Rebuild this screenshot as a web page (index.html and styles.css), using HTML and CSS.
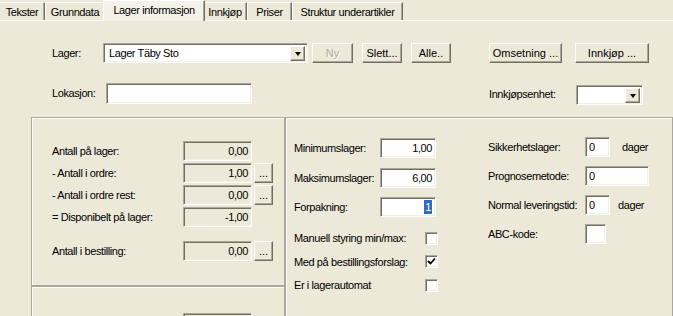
FILE: index.html
```html
<!DOCTYPE html>
<html lang="no">
<head>
    <meta charset="UTF-8">
    <title>Lager informasjon</title>
    <link rel="stylesheet" href="styles.css">
</head>
<body>
    <div class="window">
        <div class="tabs">
            <span class="tab tab-tekster">Tekster</span>
            <span class="tab tab-grunn">Grunndata</span>
            <span class="tab tab-lager active">Lager informasjon</span>
            <span class="tab tab-innk">Innkjøp</span>
            <span class="tab tab-priser">Priser</span>
            <span class="tab tab-struktur">Struktur underartikler</span>
        </div>

        <div class="sheet">
            <div class="head-row">
                <span class="lbl lbl-lager">Lager:</span>
                <div class="combo combo-lager">
                    <span class="combo-text">Lager Täby Sto</span>
                    <span class="drop"><span class="arrow"></span></span>
                </div>
                <button class="btn btn-ny" disabled>Ny</button>
                <button class="btn btn-slett">Slett...</button>
                <button class="btn btn-alle">Alle..</button>
                <button class="btn btn-oms">Omsetning ...</button>
                <button class="btn btn-innk">Innkjøp ...</button>
            </div>

            <div class="head-row second">
                <span class="lbl lbl-lok">Lokasjon:</span>
                <div class="field field-lok"></div>
                <span class="lbl lbl-enhet">Innkjøpsenhet:</span>
                <div class="combo combo-enhet">
                    <span class="combo-text"></span>
                    <span class="drop"><span class="arrow"></span></span>
                </div>
            </div>

            <div class="panels">
                <div class="left">
                    <div class="group stock">
                        <div class="qty-row">
                            <span class="qty-lbl">Antall på lager:</span>
                            <div class="field ro qty">0,00</div>
                        </div>
                        <div class="qty-row">
                            <span class="qty-lbl">- Antall i ordre:</span>
                            <div class="field ro qty">1,00</div>
                            <button class="btn dots">...</button>
                        </div>
                        <div class="qty-row">
                            <span class="qty-lbl">- Antall i ordre rest:</span>
                            <div class="field ro qty">0,00</div>
                            <button class="btn dots">...</button>
                        </div>
                        <div class="qty-row">
                            <span class="qty-lbl">= Disponibelt på lager:</span>
                            <div class="field ro qty">-1,00</div>
                        </div>
                        <div class="qty-row order">
                            <span class="qty-lbl">Antall i bestilling:</span>
                            <div class="field ro qty">0,00</div>
                            <button class="btn dots">...</button>
                        </div>
                    </div>
                    <div class="group lower">
                        <div class="field ro qty"></div>
                    </div>
                </div>

                <div class="group main">
                    <div class="col mid">
                        <div class="num-row">
                            <span class="num-lbl">Minimumslager:</span>
                            <div class="field num">1,00</div>
                        </div>
                        <div class="num-row">
                            <span class="num-lbl">Maksimumslager:</span>
                            <div class="field num">6,00</div>
                        </div>
                        <div class="num-row">
                            <span class="num-lbl">Forpakning:</span>
                            <div class="field num"><span class="sel">1</span></div>
                        </div>

                        <div class="checks">
                            <div class="check-row">
                                <span class="check-lbl">Manuell styring min/max:</span>
                                <span class="check"></span>
                            </div>
                            <div class="check-row">
                                <span class="check-lbl">Med på bestillingsforslag:</span>
                                <span class="check">
                                    <svg width="9" height="9" viewBox="0 0 9 9"><path d="M1 4 L3.5 6.5 L8 1.5" fill="none" stroke="#000" stroke-width="1.8"/></svg>
                                </span>
                            </div>
                            <div class="check-row">
                                <span class="check-lbl">Er i lagerautomat</span>
                                <span class="check"></span>
                            </div>
                        </div>
                    </div>

                    <div class="col right">
                        <div class="r-row">
                            <span class="r-lbl">Sikkerhetslager:</span>
                            <div class="field small">0</div>
                            <span class="unit">dager</span>
                        </div>
                        <div class="r-row">
                            <span class="r-lbl">Prognosemetode:</span>
                            <div class="field wide">0</div>
                        </div>
                        <div class="r-row lev">
                            <span class="r-lbl">Normal leveringstid:</span>
                            <div class="field small">0</div>
                            <span class="unit near">dager</span>
                        </div>
                        <div class="r-row abc">
                            <span class="r-lbl">ABC-kode:</span>
                            <div class="field tiny"></div>
                        </div>
                    </div>
                </div>
            </div>
        </div>
    </div>
</body>
</html>
```

FILE: styles.css
```css
* {
    box-sizing: border-box;
}
body {
    margin: 0;
    background: #ece9d8;
    font-family: "Liberation Sans", Arial, sans-serif;
    font-size: 11px;
    letter-spacing: -0.4px;
    color: #000;
    overflow: hidden;
}
.window {
    width: 673px;
    height: 316px;
    overflow: hidden;
}

/* tabs */
.tabs {
    display: flex;
    align-items: flex-end;
    height: 21px;
    border-bottom: 1px solid #fff;
}
.tab {
    display: flex;
    align-items: center;
    justify-content: center;
    height: 18px;
    border-top: 1px solid #fff;
    border-left: 1px solid #fff;
    border-right: 1px solid #716f64;
    box-shadow: inset -1px 0 #aca899;
    white-space: nowrap;
}
.tab-tekster { width: 45px; border-left: none; }
.tab-grunn { width: 60px; }
.tab-lager { width: 102px; }
.tab-innk { width: 44px; }
.tab-priser { width: 45px; }
.tab-struktur { width: 111px; }
.tab.active {
    position: relative;
    z-index: 1;
    height: 21px;
    margin: 0 -2px -1px;
    padding-bottom: 2px;
    background: #f3f1e8;
}

/* head rows */
.sheet {
    padding-top: 22px;
}
.head-row {
    display: flex;
    align-items: center;
    height: 20px;
    padding-left: 52px;
}
.head-row.second {
    align-items: flex-start;
    height: 21px;
    margin-top: 20px;
}
.lbl {
    white-space: nowrap;
}
.lbl-lager { width: 51px; }
.lbl-lok { width: 54px; line-height: 21px; }
.lbl-enhet { width: 87px; margin-left: 237px; line-height: 23px; }

.btn {
    height: 20px;
    padding: 0;
    background: #ece9d8;
    border: 1px solid;
    border-color: #fff #716f64 #716f64 #fff;
    box-shadow: inset -1px -1px #aca899;
    font: inherit;
    color: #000;
}
.btn-ny {
    width: 41px;
    margin-left: 4px;
    color: #aca899;
    text-shadow: 1px 1px #fff;
}
.btn-slett { width: 40px; margin-left: 9px; }
.btn-alle { width: 40px; margin-left: 9px; }
.btn-oms { width: 73px; margin-left: 38px; }
.btn-innk { width: 74px; margin-left: 13px; }

.field,
.combo {
    height: 20px;
    background: #fff;
    border: 1px solid;
    border-color: #aca899 #fff #fff #aca899;
    box-shadow: inset 1px 1px #716f64, inset -1px -1px #f1efe2;
    white-space: nowrap;
    overflow: hidden;
}
.combo {
    display: flex;
    align-items: center;
    padding: 2px 2px 2px 5px;
}
.combo-text {
    flex: 1;
}
.combo-lager { width: 205px; }
.combo-enhet { width: 67px; margin-top: 2px; }
.drop {
    display: flex;
    align-items: center;
    justify-content: center;
    width: 15px;
    height: 15px;
    background: #ece9d8;
    border: 1px solid;
    border-color: #fff #716f64 #716f64 #fff;
    box-shadow: inset -1px -1px #aca899;
}
.arrow {
    width: 0;
    height: 0;
    border-left: 3.5px solid transparent;
    border-right: 3.5px solid transparent;
    border-top: 4px solid #000;
    margin-top: 1px;
}
.field-lok {
    width: 146px;
    height: 21px;
}

/* panels */
.panels {
    display: flex;
    margin-top: 13px;
}
.left {
    width: 254px;
    margin-left: 31px;
}
.group {
    border: 1px solid #aca899;
    box-shadow: inset 1px 1px #fff;
}
.stock {
    height: 169px;
    padding: 23px 0 0 20px;
}
.qty-row {
    display: flex;
    align-items: center;
    height: 20px;
    margin-bottom: 2px;
}
.qty-row.order {
    margin-top: 14px;
}
.qty-lbl {
    width: 131px;
    white-space: nowrap;
}
.field.ro {
    background: #ece9d8;
}
.qty {
    width: 69px;
    padding: 3px 3px 0 0;
    text-align: right;
}
.dots {
    width: 19px;
    margin-left: 2px;
    line-height: 12px;
}
.lower {
    height: 60px;
    border-top-color: #aca899;
    padding: 26px 0 0 151px;
}

.main {
    display: flex;
    flex: 1;
    height: 220px;
    padding: 20px 0 0 8px;
}
.mid {
    width: 194px;
}
.num-row {
    display: flex;
    align-items: center;
    height: 20px;
    margin-bottom: 9.5px;
}
.num-lbl {
    width: 86px;
    white-space: nowrap;
}
.num {
    width: 56px;
    padding: 3px 3px 0 0;
    text-align: right;
}
.sel {
    background: #316ac5;
    color: #fff;
    padding: 1px 1px;
}
.checks {
    margin-top: 4px;
}
.check-row {
    display: flex;
    align-items: center;
    height: 23.5px;
}
.check-lbl {
    width: 131px;
    white-space: nowrap;
}
.check {
    display: flex;
    align-items: center;
    justify-content: center;
    width: 13px;
    height: 13px;
    background: #fff;
    border: 1px solid;
    border-color: #aca899 #fff #fff #aca899;
    box-shadow: inset 1px 1px #716f64, inset -1px -1px #f1efe2;
}

.right {
    margin-top: -1px;
}
.r-row {
    display: flex;
    align-items: center;
    height: 20px;
    margin-bottom: 9px;
}
.r-row.lev {
    margin-top: 3px;
}
.r-row.abc {
    margin-top: 6px;
}
.r-lbl {
    width: 97px;
    white-space: nowrap;
}
.r-row .field {
    padding: 3px 0 0 3px;
}
.small { width: 25px; }
.wide { width: 64px; }
.tiny { width: 21px; }
.unit {
    margin-left: 12px;
}
.unit.near {
    margin-left: 8px;
}
```
